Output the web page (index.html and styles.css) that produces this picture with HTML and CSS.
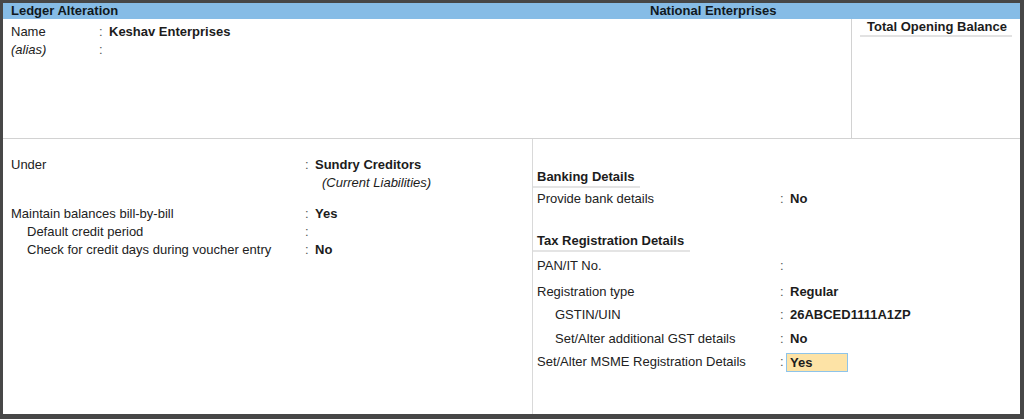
FILE: index.html
```html
<!DOCTYPE html>
<html lang="en">
<head>
    <meta charset="UTF-8">
    <meta name="viewport" content="width=device-width, initial-scale=1.0">
    <title>Ledger Alteration</title>
    <link rel="stylesheet" href="styles.css">
</head>
<body>
    <div class="window">
        <div class="titlebar">
            <span class="screen-name">Ledger Alteration</span>
            <span class="company">National Enterprises</span>
        </div>

        <div class="top">
            <div class="ident">
                <div class="row">
                    <span class="label">Name</span>
                    <span class="colon">:</span>
                    <span class="value">Keshav Enterprises</span>
                </div>
                <div class="row">
                    <span class="label italic">(alias)</span>
                    <span class="colon">:</span>
                    <span class="value"></span>
                </div>
            </div>
            <div class="balance">
                <div class="balance-title">Total Opening Balance</div>
            </div>
        </div>

        <div class="bottom">
            <div class="col left">
                <div class="row">
                    <span class="label">Under</span>
                    <span class="colon">:</span>
                    <span class="value">Sundry Creditors</span>
                </div>
                <div class="row">
                    <span class="label"></span>
                    <span class="colon"></span>
                    <span class="value sub">(Current Liabilities)</span>
                </div>
                <div class="row gap">
                    <span class="label">Maintain balances bill-by-bill</span>
                    <span class="colon">:</span>
                    <span class="value">Yes</span>
                </div>
                <div class="row">
                    <span class="label indent">Default credit period</span>
                    <span class="colon">:</span>
                    <span class="value"></span>
                </div>
                <div class="row">
                    <span class="label indent">Check for credit days during voucher entry</span>
                    <span class="colon">:</span>
                    <span class="value">No</span>
                </div>
            </div>

            <div class="col right">
                <div class="heading heading-bank">Banking Details</div>
                <div class="row">
                    <span class="label">Provide bank details</span>
                    <span class="colon">:</span>
                    <span class="value">No</span>
                </div>

                <div class="heading heading-tax">Tax Registration Details</div>
                <div class="row pan">
                    <span class="label">PAN/IT No.</span>
                    <span class="colon">:</span>
                    <span class="value"></span>
                </div>
                <div class="row reg-type">
                    <span class="label">Registration type</span>
                    <span class="colon">:</span>
                    <span class="value">Regular</span>
                </div>
                <div class="row gstin">
                    <span class="label indent">GSTIN/UIN</span>
                    <span class="colon">:</span>
                    <span class="value">26ABCED1111A1ZP</span>
                </div>
                <div class="row gst-extra">
                    <span class="label indent">Set/Alter additional GST details</span>
                    <span class="colon">:</span>
                    <span class="value">No</span>
                </div>
                <div class="row msme">
                    <span class="label">Set/Alter MSME Registration Details</span>
                    <span class="colon">:</span>
                    <span class="value"><span class="field-active">Yes</span></span>
                </div>
            </div>
        </div>
    </div>
</body>
</html>
```

FILE: styles.css
```css
* {
    box-sizing: border-box;
}
body {
    margin: 0;
    font-family: "Liberation Sans", Arial, sans-serif;
    font-size: 13px;
    color: #1c1c1c;
    background-color: #ffffff;
}
.window {
    height: 419px;
    border: 3px solid #474747;
    border-bottom-width: 5px;
    border-right-width: 4px;
    display: flex;
    flex-direction: column;
    background-color: #ffffff;
}
.titlebar {
    height: 16px;
    background-color: #86bce6;
    display: grid;
    grid-template-columns: 647px 1fr;
    align-items: center;
    font-weight: bold;
    color: #101820;
    line-height: 16px;
}
.screen-name {
    padding-left: 8px;
}
.top {
    height: 120px;
    display: flex;
    border-bottom: 1px solid #d2d2d2;
}
.ident {
    flex: 1;
    padding-top: 4px;
    --label-w: 96px;
    --colon-w: 10px;
}
.balance {
    width: 169px;
    border-left: 1px solid #d2d2d2;
    padding: 0 8px 0 8px;
}
.balance-title {
    font-weight: bold;
    text-align: center;
    line-height: 16px;
    padding-top: 0;
    padding-left: 2px;
    border-bottom: 2px solid #e2e2e2;
}
.bottom {
    flex: 1;
    display: flex;
}
.col.left {
    width: 530px;
    border-right: 1px solid #d9d9d9;
    padding-top: 17px;
    --label-w: 302px;
    --colon-w: 10px;
}
.col.right {
    flex: 1;
    --label-w: 247px;
    --colon-w: 10px;
}
.row {
    display: flex;
    line-height: 18px;
    height: 18px;
}
.row.gap {
    margin-top: 13px;
}
.row.pan {
    margin-top: 5px;
}
.row.reg-type {
    margin-top: 8px;
}
.row.gstin {
    margin-top: 5px;
}
.row.gst-extra {
    margin-top: 6px;
}
.row.msme {
    margin-top: 5px;
}
.label {
    width: var(--label-w);
    padding-left: 8px;
    color: #222;
}
.col.right .label {
    padding-left: 4px;
}
.label.indent {
    padding-left: 24px;
}
.col.right .label.indent {
    padding-left: 22px;
}
.italic {
    font-style: italic;
}
.colon {
    width: var(--colon-w);
    color: #555;
}
.value {
    font-weight: bold;
}
.value.sub {
    font-weight: normal;
    font-style: italic;
    padding-left: 7px;
}
.heading {
    font-weight: bold;
    line-height: 18px;
    padding-left: 4px;
    border-bottom: 2px solid #e4e4e4;
}
.heading-bank {
    margin-top: 29px;
    margin-bottom: 2px;
    width: 107px;
}
.heading-tax {
    margin-top: 24px;
    width: 157px;
}
.field-active {
    display: inline-block;
    width: 62px;
    height: 19px;
    line-height: 17px;
    margin-left: -4px;
    padding-left: 3px;
    background-color: #fde3a6;
    border: 1px solid #8ec4ea;
}
```
